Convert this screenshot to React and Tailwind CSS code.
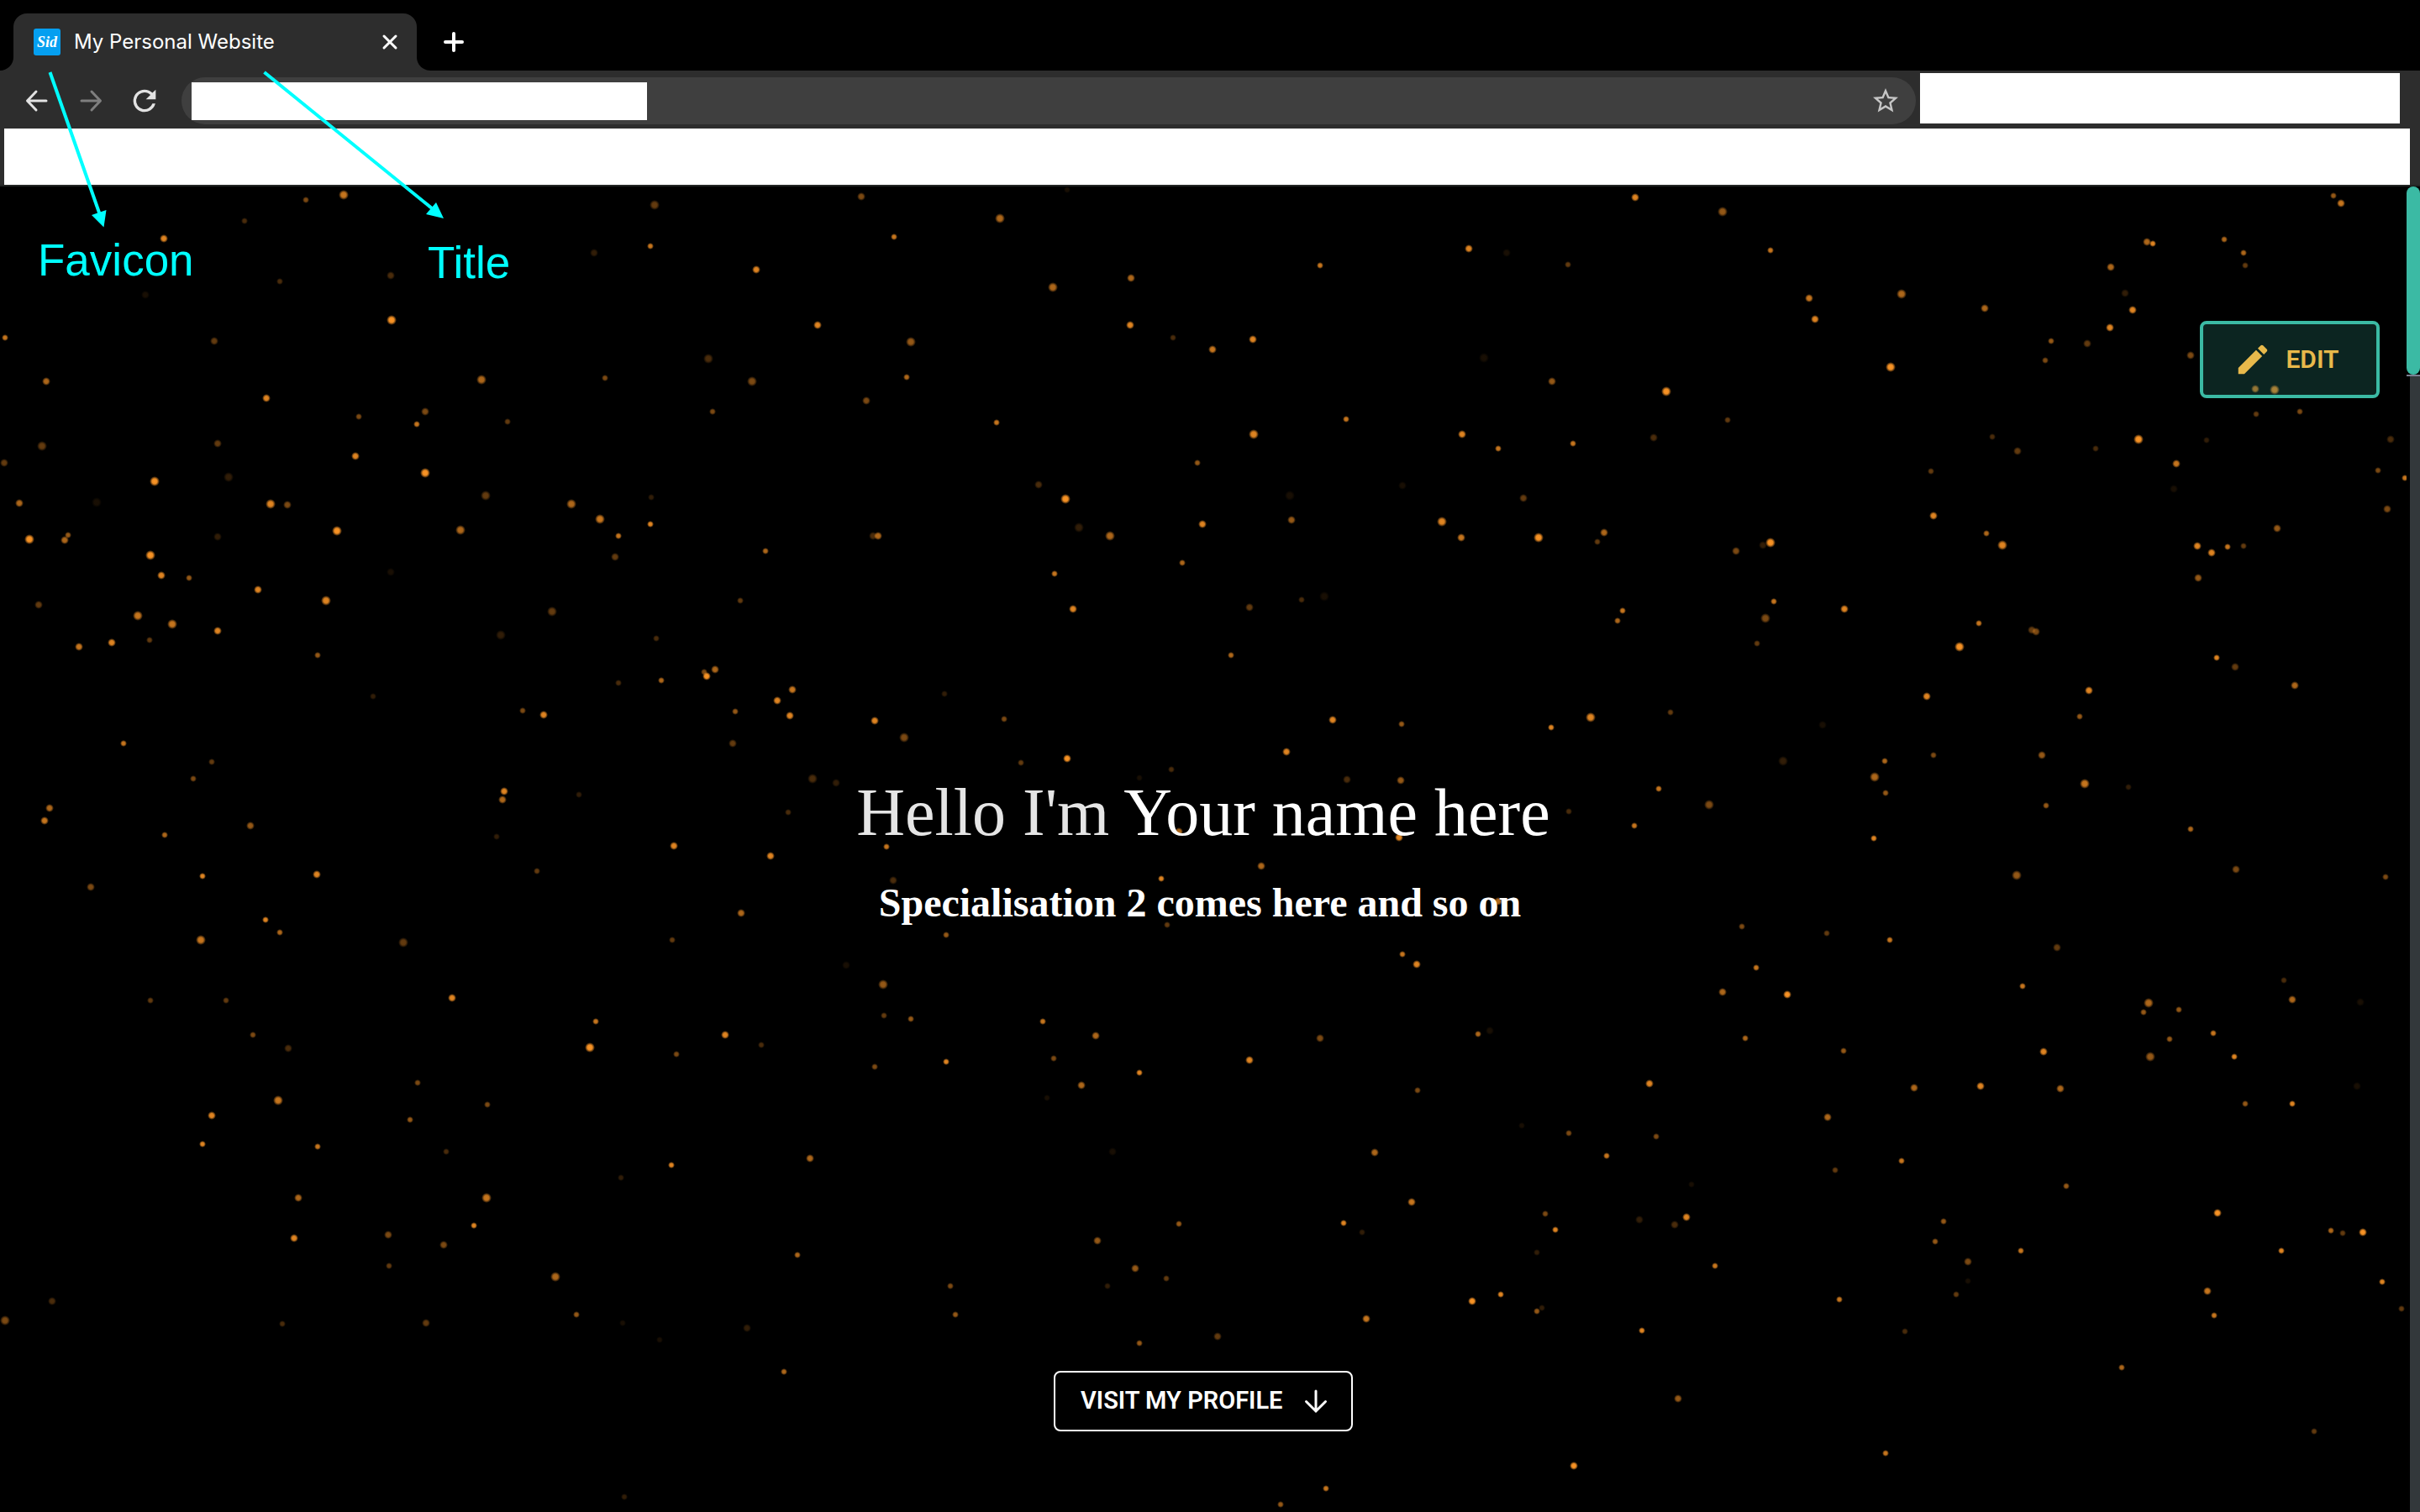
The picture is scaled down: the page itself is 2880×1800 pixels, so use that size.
import React from "react";

// Each field: origin, unit size, then "x y size brightness" entries.
const FIELDS = [
  {
    ox: 0, oy: 0, ux: 0.40816, uy: 0.33333,
    dots: "892 714 1 5,1001 696 3 8,712 788 1 3,477 851 2 9,817 1006 1 3,1140 983 2 3,425 1053 2 1",
  },
  {
    ox: 0, oy: 360, ux: 0.45918, uy: 0.33333,
    dots: "1014 64 3 10,14 125 1 8,555 137 2 4,119 283 2 7,1247 277 3 7,691 343 2 9,1103 389 2 5,931 407 1 5,1081 435 1 8,1316 425 1 4,565 504 2 4,108 512 3 4,921 549 2 9,10 572 2 4,1101 608 3 10,592 625 3 2,400 640 3 10,1258 690 3 4,251 714 3 1,50 717 2 7,701 721 3 9,745 723 2 5,1480 719 3 7,76 846 3 10,176 831 1 6,168 849 2 7,565 837 2 2,873 817 3 10,1193 814 3 7,390 903 3 10,418 975 2 9,490 985 1 6,1012 964 2 1,668 1026 2 9,844 1066 3 9,100 1079 2 4,357 1118 3 8,1430 1103 3 4,447 1148 3 8,565 1173 2 9,1298 1188 3 2,387 1206 1 4,289 1215 2 9,204 1230 2 8,824 1261 1 6,968 1406 1 2",
  },
  {
    ox: 700, oy: 220, ux: 0.68878, uy: 0.49745,
    dots: "114 48 3 4,472 28 2 5,827 12 1 1,711 80 3 7,108 147 1 8,529 124 1 8,10 162 2 2,290 204 2 9,1522 152 2 9,1264 193 1 8,803 245 3 7,938 223 2 7,397 336 2 9,936 336 2 9,1010 366 1 3,1079 395 2 8,1149 370 2 9,557 375 3 6,207 417 3 3,1547 414 3 1,29 463 1 5,550 460 1 7,283 470 3 5,481 517 2 5,215 543 1 5,706 569 1 8,1310 560 1 8,1150 598 3 9,1510 598 2 9,1053 666 1 6,778 717 2 3,1407 719 2 1,1212 744 3 1,109 748 1 2,824 752 3 10,20 801 3 8,107 813 1 9,52 841 1 8,1061 813 2 9,1215 803 2 6,1475 806 3 9,848 820 3 2,902 841 3 7,1508 845 2 8,492 840 2 3,501 840 2 7,307 877 1 7,47 890 2 4,1026 904 1 7,806 930 1 8,838 1016 2 9,263 995 1 4,1232 994 1 3,1272 985 3 1,1142 1012 2 4,118 1086 1 3,1110 1125 1 7,219 1160 2 7,200 1166 1 5,204 1176 2 10,126 1187 1 7,52 1193 1 3,353 1208 2 8,326 1235 2 9,616 1219 1 2,254 1261 1 6,348 1271 2 9,718 1279 1 5,495 1283 2 9,1286 1280 2 9,1406 1291 1 6,546 1323 3 5,249 1337 2 4,1207 1357 2 9,828 1373 2 10,748 1384 1 4,1008 1400 1 3,387 1421 3 3,428 1431 2 2,953 1420 1 1,1311 1424 2 3,1404 1425 2 6,345 1502 1 3,1021 1547 2 7,1401 1562 2 9",
  },
  {
    ox: 1780, oy: 220, ux: 0.70153, uy: 0.49745,
    dots: "236 30 2 9,385 65 3 6,1421 26 1 6,1434 44 2 8,1105 136 2 7,1115 141 1 9,1236 131 1 7,466 157 1 8,1269 163 1 7,18 162 2 1,122 190 1 4,1272 192 1 4,1043 198 2 7,689 261 3 7,1067 260 2 2,532 272 2 8,830 296 2 7,1080 299 2 9,541 321 2 9,1042 341 2 9,942 373 1 6,1004 379 2 4,932 421 1 5,1179 408 2 5,670 437 3 10,96 470 2 6,290 495 3 10,1288 489 2 7,1321 491 3 8,1364 542 1 5,1290 548 1 4,393 563 1 4,268 605 2 3,843 604 1 3,1090 610 3 10,1206 612 1 2,1518 610 2 3,131 619 1 8,4 631 1 8,885 638 2 4,1018 632 1 3,1155 668 2 8,739 685 1 4,1497 684 1 5,1543 702 1 8,1151 728 2 1,47 750 2 4,742 792 2 9,1512 775 2 5,1325 822 2 6,184 832 2 7,172 855 1 4,832 834 1 7,72 845 3 10,466 856 3 10,454 863 2 2,407 877 2 5,860 863 3 9,1190 864 2 9,1215 881 2 9,1241 866 1 8,1268 864 1 4,1192 940 2 6,472 998 1 8,592 1015 2 9,215 1019 1 8,457 1038 3 5,207 1044 1 7,819 1050 1 8,910 1066 2 4,916 1070 2 5,444 1098 1 4,787 1105 3 10,1223 1132 1 9,1254 1153 2 4,1355 1198 2 7,731 1224 2 9,1006 1210 2 9,297 1263 1 4,161 1274 3 9,94 1298 1 9,990 1273 1 6,555 1292 2 1,743 1365 1 5,926 1364 2 6,488 1380 3 2,660 1380 1 7,643 1417 3 7,999 1433 3 8,1074 1442 1 2,276 1446 1 8,662 1455 1 6,362 1483 3 5,933 1486 1 6,124 1500 1 3,235 1534 1 8,641 1563 1 9,1179 1541 1 7",
  },
  {
    ox: 0, oy: 840, ux: 0.91837, uy: 0.61224,
    dots: "677 9 1 5,704 18 2 9,160 73 1 8,274 110 1 4,250 142 1 5,653 167 2 9,651 183 2 7,750 173 1 2,64 199 2 7,58 224 2 8,324 233 2 6,213 251 1 7,644 254 1 2,873 273 2 9,998 293 2 9,1149 274 1 8,262 332 1 9,410 329 2 9,696 321 1 4,118 352 2 5,1157 340 2 3,1505 336 1 9,960 403 2 7,344 416 1 9,363 441 1 7,1226 446 1 6,1512 426 1 4,260 456 3 8,871 455 1 4,523 461 3 4,1097 505 2 1,1144 542 3 6,195 574 1 4,293 574 1 4,586 568 2 9,1146 602 1 4,1180 610 1 6,772 614 1 8,1351 614 1 8,328 640 1 5,374 667 2 3,940 641 2 9,1420 642 2 7,986 660 1 3,764 664 3 10,877 678 1 5,1226 692 1 9,1365 686 1 5,1134 703 1 5,1477 714 1 9,541 733 1 5,1401 738 2 7,1357 763 1 1,360 768 3 8,632 776 1 5,274 797 2 9,531 805 1 6,262 852 1 9,412 858 1 8,578 868 1 3,870 894 1 9,1050 880 2 7,1442 867 2 1,805 918 1 2,631 957 3 8,387 957 2 7,614 1011 1 9,1528 1008 1 6,503 1029 2 5,381 1036 2 9,575 1048 2 5,1422 1041 2 6,1033 1068 1 7,504 1089 1 4,1471 1094 2 6,720 1110 3 7,1511 1114 1 4,1232 1128 1 5,1435 1129 1 2,68 1158 2 3,747 1184 1 6,1238 1184 1 6,7 1196 3 5,366 1202 1 3,552 1200 2 4,807 1201 1 1,968 1211 2 2,855 1233 1 1,1477 1239 1 6,1016 1296 1 7,809 1538 1 2",
  },
  {
    ox: 1440, oy: 1000, ux: 0.91837, uy: 0.5102,
    dots: "66 61 2 7,1045 82 3 6,1330 68 2 5,1523 86 1 5,374 144 2 7,689 202 1 5,799 217 1 4,881 234 1 8,1098 250 2 4,249 267 1 8,268 290 2 9,708 297 1 8,1392 327 1 3,1053 341 1 8,664 354 2 7,748 361 2 10,1216 380 3 7,1403 373 2 7,1491 379 2 1,1210 401 1 6,1256 396 1 6,363 444 2 1,347 453 1 7,143 462 2 5,1300 450 1 8,694 463 1 7,1244 465 1 6,821 492 1 6,1080 494 2 9,51 513 2 9,1218 505 3 6,1327 505 1 9,570 568 2 9,913 579 2 7,998 574 2 9,1102 581 2 7,1486 575 2 1,269 584 1 5,1341 616 1 6,1403 616 1 9,800 646 2 7,404 667 1 1,465 684 1 5,578 692 1 5,213 730 2 7,514 737 1 8,896 749 1 8,810 770 1 4,1110 808 1 6,624 804 1 1,261 844 2 8,435 872 1 5,1306 870 2 10,556 885 2 2,617 880 2 9,951 890 1 6,173 894 1 9,602 898 2 3,447 910 1 9,197 915 1 2,1453 911 1 7,1494 915 2 10,1468 917 1 4,940 937 1 6,1051 958 1 8,424 962 1 2,1388 958 1 9,982 983 2 5,654 993 1 8,982 1029 1 1,1519 1031 1 9,1292 1052 2 8,377 1061 1 9,967 1061 1 4,340 1077 2 10,816 1072 1 8,430 1091 1 2,424 1100 1 6,1544 1094 1 4,1301 1109 1 8,202 1118 2 8,560 1145 1 9,901 1147 1 3,10 1159 2 4,1181 1230 1 7,607 1304 2 6,1431 1380 1 4,875 1431 1 8,471 1461 2 10,150 1514 1 8,92 1550 1 6",
  },
];

const RADII = [0, 4, 5, 6];

const PARTICLES = FIELDS.flatMap((f) =>
  f.dots.split(",").map((entry) => {
    const [x, y, size, light] = entry.split(" ").map(Number);
    return {
      x: Math.round(f.ox + x * f.ux),
      y: Math.round(f.oy + y * f.uy),
      r: RADII[size],
      o: light / 10,
    };
  })
);

function Particles() {
  return (
    <svg className="pointer-events-none absolute left-0 top-0" width="2864" height="1578" viewBox="0 222 2864 1578" aria-hidden="true">
      <defs>
        <radialGradient id="ember">
          <stop offset="0" stopColor="#ff9726" />
          <stop offset="0.5" stopColor="#ff9726" stopOpacity="0.92" />
          <stop offset="1" stopColor="#ff9726" stopOpacity="0" />
        </radialGradient>
      </defs>
      {PARTICLES.map((p, i) => (
        <circle key={i} cx={p.x} cy={p.y} r={p.r} fill="url(#ember)" opacity={p.o} />
      ))}
    </svg>
  );
}

function Annotations() {
  return (
    <>
      <svg className="pointer-events-none absolute left-0 top-0" width="640" height="300" viewBox="0 0 640 300" aria-hidden="true">
        <g stroke="#00ffff" strokeWidth="4" fill="#00ffff">
          <path d="M59.5 86L119 256" />
          <path d="M314.500 86L514 248" />
          <path stroke="none" d="M123.500 270.500L109 256L126.500 250Z" />
          <path stroke="none" d="M528 260L507 255L519 241Z" />
        </g>
      </svg>
      <span className="absolute left-[45px] top-[280px] font-['Liberation_Sans'] text-[53px] leading-[60px] text-[#00ffff]">Favicon</span>
      <span className="absolute left-[509px] top-[283px] font-['Liberation_Sans'] text-[53px] leading-[60px] text-[#00ffff]">Title</span>
    </>
  );
}

function TabStrip() {
  return (
    <div className="flex h-[84px] items-end bg-black">
      <div className="h-4 w-4 bg-[#2d2d2d]">
        <div className="h-4 w-4 rounded-br-2xl bg-black" />
      </div>
      <div className="flex h-[68px] w-[480px] items-center rounded-t-2xl bg-[#2d2d2d] pl-6 pr-5">
        <svg width="32" height="32" viewBox="0 0 32 32" aria-hidden="true">
          <rect width="32" height="32" rx="3" fill="#059ff0" />
          <text x="16" y="22" textAnchor="middle" fontFamily="'Liberation Serif', serif" fontStyle="italic" fontWeight="700" fontSize="18" fill="#fff">Sid</text>
        </svg>
        <span className="ml-4 flex-1 whitespace-nowrap font-['Inter'] text-2xl text-white">My Personal Website</span>
        <button aria-label="Close tab" className="text-white">
          <svg width="24" height="24" viewBox="0 0 24 24" fill="none" stroke="currentColor" strokeWidth="3" strokeLinecap="round">
            <path d="M5 5L19 19M19 5L5 19" />
          </svg>
        </button>
      </div>
      <div className="h-4 w-4 bg-[#2d2d2d]">
        <div className="h-4 w-4 rounded-bl-2xl bg-black" />
      </div>
      <button aria-label="New tab" className="mb-[18px] ml-3 text-white">
        <svg width="32" height="32" viewBox="0 0 32 32" fill="none" stroke="currentColor" strokeWidth="4" strokeLinecap="round">
          <path d="M16 6V26M6 16H26" />
        </svg>
      </button>
    </div>
  );
}

function Toolbar() {
  return (
    <div className="border-b-2 border-[#222423] bg-[#2d2d2d]">
      <div className="flex h-[69px] items-start pl-6 pr-6">
        <div className="mt-4 flex gap-6 pr-6">
          <button aria-label="Back" className="text-[#e2e2e2]">
            <svg width="40" height="40" viewBox="0 0 40 40" fill="none" stroke="currentColor" strokeWidth="3" strokeLinecap="round" strokeLinejoin="round">
              <path d="M31 20H9M19 9L8.500 20L19 31" />
            </svg>
          </button>
          <button aria-label="Forward" className="text-[#7f7f7f]">
            <svg width="40" height="40" viewBox="0 0 40 40" fill="none" stroke="currentColor" strokeWidth="3" strokeLinecap="round" strokeLinejoin="round">
              <path d="M9 20H31M21 9L31.500 20L21 31" />
            </svg>
          </button>
          <button aria-label="Reload" className="text-[#e2e2e2]">
            <svg width="40" height="40" viewBox="0 0 24 24" fill="currentColor">
              <path d="M17.65 6.35A7.96 7.96 0 0 0 12 4a8 8 0 1 0 7.73 10h-2.080A6 6 0 1 1 12 6c1.660 0 3.140.69 4.220 1.780L13 11h7V4l-2.350 2.350z" />
            </svg>
          </button>
        </div>
        <div className="mt-2 flex h-14 flex-1 items-center justify-between rounded-full bg-[#3f3f3f] pl-3 pr-[18px]">
          <input aria-label="Address" className="h-[45px] w-[542px] bg-white outline-none" />
          <button aria-label="Bookmark this page" className="text-[#c6c6c6]">
            <svg width="36" height="36" viewBox="0 0 24 24" fill="currentColor">
              <path d="M22 9.240l-7.190-.62L12 2 9.190 8.630 2 9.240l5.460 4.730L5.820 21 12 17.270 18.180 21l-1.630-7.030L22 9.240zM12 15.400l-3.760 2.270 1-4.280-3.320-2.880 4.380-.38L12 6.100l1.710 4.040 4.380.38-3.320 2.880 1 4.280L12 15.400z" />
            </svg>
          </button>
        </div>
        <div className="ml-[5px] mt-[3px] h-[60px] w-[571px] bg-white" />
      </div>
      <div className="ml-[5px] mr-3 h-[67px] bg-white" />
    </div>
  );
}

function Hero() {
  return (
    <main className="relative flex flex-1 flex-col items-center overflow-hidden bg-black px-8 pb-24 pt-40">
      <Particles />
      <button className="relative flex h-[92px] min-w-[214px] items-center justify-center gap-4 self-end rounded-lg border-4 border-[#3bbaa4] bg-[#3bbaa4]/20 pr-2 font-['Roboto'] text-[30px] leading-9 font-semibold text-[#e8b94b]">
        <svg width="46" height="46" viewBox="0 0 24 24" fill="currentColor" aria-hidden="true">
          <path d="M3 17.250V21h3.750L17.810 9.940l-3.750-3.750L3 17.250zM20.710 7.040a1 1 0 0 0 0-1.410l-2.340-2.340a1 1 0 0 0-1.410 0l-1.830 1.830 3.750 3.750 1.830-1.830z" />
        </svg>
        EDIT
      </button>
      <div className="relative flex flex-1 flex-col items-center justify-center pb-20 font-['Liberation_Serif'] text-white">
        <h1 className="text-[80px] leading-[96px]">
          <span className="text-[#e5e5e5]">Hello I'm</span> Your name here
        </h1>
        <h2 className="mt-7 pr-2 text-5xl leading-[64px] font-bold">Specialisation 2 comes here and so on</h2>
      </div>
      <button className="relative flex h-[72px] min-w-[356px] items-center justify-between rounded-lg border-2 border-white pl-[30px] pr-[26px] font-['Roboto'] text-[29px] font-semibold text-white">
        VISIT MY PROFILE
        <svg width="32" height="32" viewBox="0 0 32 32" fill="none" stroke="currentColor" strokeWidth="3" strokeLinecap="round" aria-hidden="true">
          <path d="M16 4V28M4.500 16.500L16 28L27.500 16.500" />
        </svg>
      </button>
    </main>
  );
}

export default function App() {
  return (
    <div className="relative flex min-h-screen flex-col overflow-hidden bg-black">
      <TabStrip />
      <Toolbar />
      <div className="flex flex-1">
        <Hero />
        <div className="flex w-4 flex-col">
          <div className="h-56 rounded-full bg-[#3bbaa4]" />
          <div className="h-0.5 bg-[#7b7f92]" />
          <div className="ml-1 flex-1 bg-[#33383b]" />
        </div>
      </div>
      <Annotations />
    </div>
  );
}
